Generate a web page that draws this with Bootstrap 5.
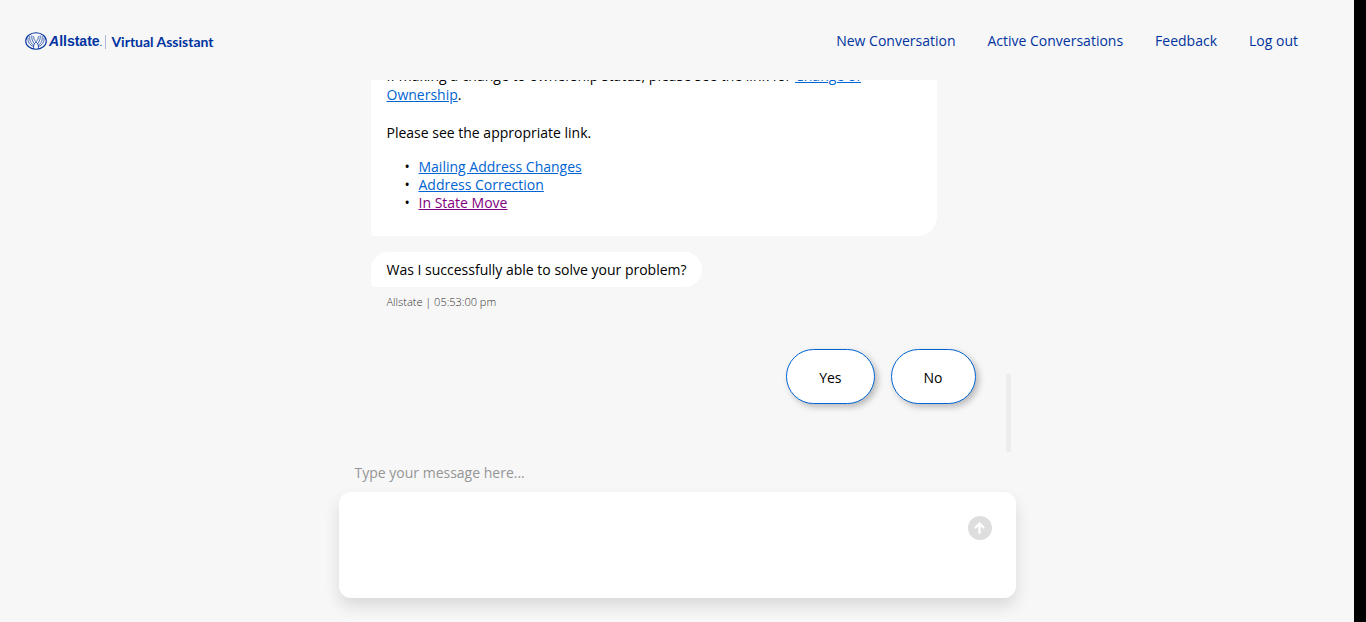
<!DOCTYPE html>
<html lang="en">
<head>
<meta charset="utf-8">
<meta name="viewport" content="width=device-width, initial-scale=1">
<title>Allstate Virtual Assistant</title>
<link href="https://cdn.jsdelivr.net/npm/bootstrap@5.3.0/dist/css/bootstrap.min.css" rel="stylesheet">
<style>
  body { font-family: "Open Sans", sans-serif; font-size: 14px; line-height: 19px; color: #000; background: #000; }
  .app { background: #f7f7f7; margin-right: 12px; }
  .topbar { height: 80px; padding: 0 56px 0 25px; }
  .brand { color: #0033a0; padding-top: 2px; }
  .brand-name { font-family: "Liberation Sans", sans-serif; font-weight: 700; font-size: 14px; margin-left: 2px; padding-top: 2px; }
  .brand-name small { font-weight: 400; font-size: 10px; }
  .brand-product { font-family: Lato, sans-serif; font-weight: 700; font-size: 14px; border-left: 1px solid #a9b8dc; padding-left: 5px; line-height: 14px; margin: 2px 0 0 3px; }
  .topbar .nav { gap: 32px; }
  .topbar .nav-link { color: #0033a0; padding: 0; }
  .chat-column { width: 50%; min-height: 0; }
  .thread { min-height: 0; padding: 0 40px 48px 32px; }
  .bubble { background: #fff; padding: 8px 15px 8px 16px; border-radius: 20px 20px 20px 4px; }
  .bubble-long { width: 566px; max-width: 100%; padding-bottom: 24px; }
  .bubble a { color: #0064d2; }
  .bubble a.seen { color: #800080; }
  .bubble ul { line-height: 18px; margin: 16px 0 0; padding-left: 32px; }
  .bubble ul { list-style: none; }
  .bubble li::before { content: "•"; display: inline-block; width: 14px; margin-left: -14px; }
  .stamp { font-size: 11px; font-weight: 300; line-height: 15px; color: #333; padding: 7px 16px 0; }
  .replies { gap: 16px; margin-top: 40px; }
  .btn-reply { --bs-btn-font-size: 14px; --bs-btn-line-height: 19px; --bs-btn-padding-x: 32px; --bs-btn-padding-y: 17px; --bs-btn-border-radius: 28px; --bs-btn-color: #000; --bs-btn-bg: #fff; --bs-btn-border-color: #0064d2; padding-top: 18px; padding-bottom: 16px; box-shadow: 3px 3px 6px rgba(0,0,0,.25); }
  .scroll-thumb { right: 5px; bottom: 0; width: 5px; height: 78px; background: #ededed; }
  .composer { padding-bottom: 24px; }
  .composer label { color: #959595; padding: 11px 16px 10px; }
  .composer-box { background: #fff; border-radius: 12px; height: 106px; padding: 16px 24px 16px 16px; box-shadow: 0 8px 16px rgba(0,0,0,.12); }
  .composer-box textarea { resize: none; font-size: 14px; }
  .btn-send { width: 24px; height: 24px; margin-top: 8px; }
</style>
</head>
<body>
<div class="app vh-100 d-flex flex-column overflow-hidden">
  <header class="topbar d-flex align-items-center justify-content-between flex-shrink-0">
    <a class="brand d-flex align-items-center text-decoration-none" href="#">
      <svg width="22" height="18" viewBox="0 0 22 18" fill="none" stroke="#0033a0" stroke-linecap="round" aria-hidden="true">
        <ellipse cx="11" cy="9" rx="10.300" ry="8.200" stroke-width="1.100"/>
        <g stroke-width=".7">
          <path d="M3 6c-.5 4 1.500 7 5.500 8.500M4.800 4.500c-.5 4 .8 6.500 4 9M6.800 3.800c-.3 3 .5 5.500 2.700 8M8.600 4.500c.2 2 .6 3.500 1.900 5"/>
          <path d="M19 6c.5 4-1.500 7-5.500 8.500M17.200 4.500c.5 4-.8 6.500-4 9M15.200 3.800c.3 3-.5 5.500-2.700 8M13.400 4.500c-.2 2-.6 3.500-1.900 5"/>
          <path d="M8.500 16.500c-.3-3 .7-5 2.500-6.500 1.800 1.500 2.800 3.500 2.500 6.500"/>
        </g>
      </svg>
      <span class="brand-name"><i>A</i>llstate<small>.</small></span>
      <span class="brand-product">Virtual Assistant</span>
    </a>
    <nav class="nav" aria-label="Main">
      <a class="nav-link" href="#">New Conversation</a>
      <a class="nav-link" href="#">Active Conversations</a>
      <a class="nav-link" href="#">Feedback</a>
      <a class="nav-link" href="#">Log out</a>
    </nav>
  </header>

  <main class="chat-column mx-auto flex-grow-1 d-flex flex-column">
    <section class="thread position-relative flex-grow-1 d-flex flex-column justify-content-end align-items-start overflow-hidden" aria-label="Conversation">
      <div class="bubble bubble-long flex-shrink-0 mb-3">
        <p class="mb-0">If making a change to ownership status, please see the link for <a href="#">Change of Ownership</a>.</p>
        <br>
        <p class="mb-0">Please see the appropriate link.</p>
        <ul>
          <li><a href="#">Mailing Address Changes</a></li>
          <li><a href="#">Address Correction</a></li>
          <li><a class="seen" href="#">In State Move</a></li>
        </ul>
      </div>
      <div class="bubble flex-shrink-0">Was I successfully able to solve your problem?</div>
      <div class="stamp flex-shrink-0">Allstate | 05:53:00 pm</div>
      <div class="replies d-flex align-self-end flex-shrink-0">
        <button type="button" class="btn btn-reply">Yes</button>
        <button type="button" class="btn btn-reply">No</button>
      </div>
      <div class="scroll-thumb position-absolute"></div>
    </section>

    <form class="composer flex-shrink-0">
      <label class="d-block" for="message">Type your message here...</label>
      <div class="composer-box d-flex align-items-start">
        <textarea id="message" class="form-control border-0 shadow-none p-0 h-100 flex-grow-1"></textarea>
        <button type="button" class="btn btn-send p-0 border-0 d-flex flex-shrink-0" aria-label="Send message">
          <svg width="24" height="24" viewBox="0 0 24 24" aria-hidden="true">
            <circle cx="12" cy="12" r="12" fill="#dedede"/>
            <path d="M11.500 17V8M7.500 11.500l4-4 4 4" fill="none" stroke="#fff" stroke-width="2.200" stroke-linecap="round" stroke-linejoin="round"/>
          </svg>
        </button>
      </div>
    </form>
  </main>
</div>
<script src="https://cdn.jsdelivr.net/npm/bootstrap@5.3.0/dist/js/bootstrap.bundle.min.js"></script>
</body>
</html>
